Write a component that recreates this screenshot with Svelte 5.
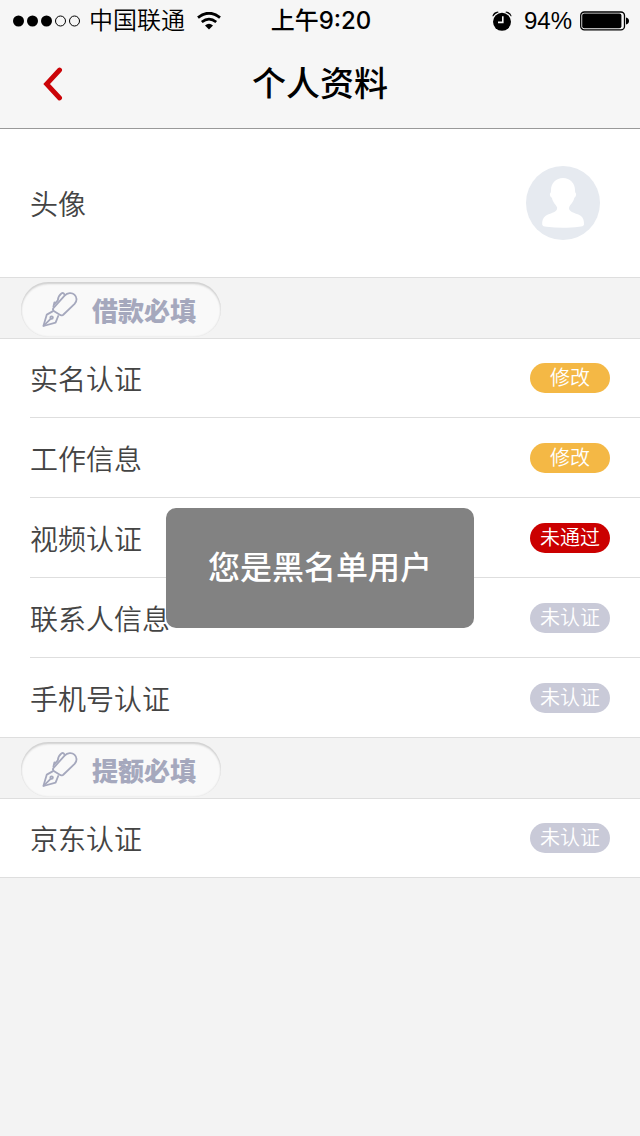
<script>
  const sections = [
    {
      title: "借款必填",
      items: [
        { name: "实名认证", status: "edit" },
        { name: "工作信息", status: "edit" },
        { name: "视频认证", status: "failed" },
        { name: "联系人信息", status: "none" },
        { name: "手机号认证", status: "none" },
      ],
    },
    {
      title: "提额必填",
      items: [{ name: "京东认证", status: "none" }],
    },
  ];

  const statusText = {
    edit: "修改",
    failed: "未通过",
    none: "未认证",
  };

  let toast = $state("您是黑名单用户");

  function goBack() {
    history.back();
  }
</script>

<div class="page">
  <div class="statusbar">
    <div class="carrier">
      <svg class="signal" width="68" height="12" viewBox="0 0 68 12">
        <circle cx="5.5" cy="6" r="5.5" />
        <circle cx="19.5" cy="6" r="5.5" />
        <circle cx="33.5" cy="6" r="5.5" />
        <circle class="empty" cx="47.5" cy="6" r="5" />
        <circle class="empty" cx="61.5" cy="6" r="5" />
      </svg>
      <span class="name">中国联通</span>
      <svg width="24" height="18" viewBox="0 0 24 18">
        <path d="M1 5.6 Q12 -3.2 23 5.6" fill="none" stroke="#000" stroke-width="2.8" />
        <path d="M4.8 10 Q12 4.2 19.2 10" fill="none" stroke="#000" stroke-width="2.7" />
        <path d="M8 13.4 Q12 10.2 16 13.4 L12 17.6 Z" />
      </svg>
    </div>
    <time>上午9:20</time>
    <div class="power">
      <svg width="20" height="20" viewBox="0 0 20 20">
        <circle cx="10" cy="10.8" r="9" />
        <path d="M0.4 5 Q1.4 1 6 0.6 L6.6 1.2 Q3 2.4 1 5.4 Z M19.6 5 Q18.6 1 14 0.6 L13.4 1.2 Q17 2.4 19 5.4 Z" />
        <path d="M10.8 5.2 V11.4 H6" fill="none" stroke="#f6f6f6" stroke-width="1.6" />
      </svg>
      <span class="percent">94%</span>
      <svg width="49" height="20" viewBox="0 0 49 20">
        <rect x="0.7" y="1" width="43.8" height="17.8" rx="3.6" fill="none" stroke="#000" stroke-width="1.3" />
        <rect x="2.2" y="2.5" width="39.2" height="14.8" rx="2" />
        <path d="M46 6.6 Q49 7.4 49 10 Q49 12.6 46 13.4 Z" />
      </svg>
    </div>
  </div>

  <header>
    <button class="back" aria-label="返回" onclick={goBack}>
      <svg width="20" height="34" viewBox="0 0 20 34">
        <path d="M16.6 3 L3.6 17 L16.6 31" fill="none" stroke="#cb0408" stroke-width="4.8" stroke-linecap="round" stroke-linejoin="miter" />
      </svg>
    </button>
    <h1>个人资料</h1>
  </header>

  <main>
    <a class="avatar-row" href="#avatar">
      <span>头像</span>
      <svg width="74" height="74" viewBox="0 0 74 74">
        <circle cx="37" cy="37" r="37" fill="#e6eaf0" />
        <path
          d="M37 12 C44 12 49 17 49 24 C49 26 49.4 26.6 50 27.6 C50.4 29.4 49.6 31 48.4 31.8 C47.6 35.2 46 37.4 44 39.4 C42.6 41.4 42.8 43 44 44.6 C46.6 47.4 52 47.8 55 50 C57.6 52 58 55 58 58.4 C57.6 60 56 60.4 53 60.8 C43 62.2 31 62.2 20.6 60.8 C18 60.4 16.6 60 16.2 58.4 C16 55 16.8 52 19.4 50 C22.4 47.8 27.6 47.4 30.2 44.6 C31.4 43 31.6 41.4 30 39.4 C28 37.4 26.6 35.2 25.8 31.8 C24.4 31 23.6 29.4 24 27.6 C24.8 26.6 25 26 25 24 C25 17 30 12 37 12 Z"
          fill="#fff"
        />
      </svg>
    </a>

    {#each sections as section}
      <section>
        <div class="section-head">
          <h2>
            <svg width="36" height="36" viewBox="0 0 36 36" fill="none" stroke="#a5a8bd" stroke-width="1.8" stroke-linejoin="round" stroke-linecap="round">
              <path d="M11.8 19 C10.8 18 10.8 16.6 11.8 15.6 L22.6 3.6 C25.4 0.6 29.8 0.2 32.4 2.6 C35.2 5.2 35.2 9 32.6 11.8 L21 23 C19.8 23.6 18.8 23.6 17.8 22.8 Z" />
              <path d="M11.4 14.6 L12.4 10.4 M12 12.6 L15.8 8.4 C16 5.4 17.2 3 19.4 1.4 C20.6 0.6 22 1 22.4 2.6" />
              <path d="M10.6 19.4 L4.8 22.6 L1.4 34 L13.6 30.6 L16.2 24" />
              <path d="M1.8 33.6 L8.6 26.8" />
              <circle cx="9.6" cy="25.6" r="1.3" />
            </svg>
            {section.title}
          </h2>
        </div>
        <ul>
          {#each section.items as item}
            <li>
              <a href="#{item.status}">
                <span>{item.name}</span>
                <span class="badge {item.status}">{statusText[item.status]}</span>
              </a>
            </li>
          {/each}
        </ul>
      </section>
    {/each}
  </main>

  {#if toast}
    <div class="toast" role="alert">{toast}</div>
  {/if}
</div>

<style>
  :global(body) {
    background: #f3f3f3;
  }

  * {
    box-sizing: border-box;
  }

  .page {
    min-height: 100vh;
    font-family: Inter, "Noto Sans CJK SC", sans-serif;
    color: #444;
    background: #f3f3f3;
  }

  svg {
    display: block;
    flex: none;
  }

  .statusbar {
    display: grid;
    grid-template-columns: 1fr auto 1fr;
    align-items: center;
    height: 40px;
    padding: 0 11px 0 13px;
    font-size: 24px;
    line-height: 42px;
    color: #000;
    background: #f6f6f6;
  }

  .carrier,
  .power {
    display: flex;
    align-items: center;
    gap: 8px;
    font-weight: 350;
  }

  .power {
    justify-content: flex-end;
  }

  .name {
    padding-right: 4px;
  }

  .percent {
    padding-left: 4px;
    font-family: "Liberation Sans", sans-serif;
  }

  .signal .empty {
    fill: none;
    stroke: #000;
  }

  time {
    font-weight: 500;
  }

  header {
    display: grid;
    grid-template-columns: 80px 1fr 80px;
    align-items: center;
    height: 89px;
    color: #000;
    background: #f6f6f6;
    border-bottom: 1px solid #999;
  }

  .back {
    display: flex;
    align-items: center;
    height: 88px;
    padding: 0 0 0 43px;
    border: 0;
    background: none;
    cursor: pointer;
  }

  h1 {
    margin: 0;
    font-size: 34px;
    line-height: 88px;
    font-weight: 500;
    text-align: center;
  }

  a {
    color: inherit;
    text-decoration: none;
  }

  .avatar-row {
    display: flex;
    align-items: center;
    justify-content: space-between;
    height: 149px;
    padding: 0 40px 0 30px;
    font-size: 28px;
    font-weight: 350;
    background: #fff;
    border-bottom: 1px solid #dedede;
  }

  .section-head {
    padding: 4px 21px 0;
    height: 61px;
    border-bottom: 1px solid #dedede;
  }

  h2 {
    display: flex;
    align-items: center;
    gap: 14px;
    width: 200px;
    height: 55px;
    margin: 0;
    padding-left: 21px;
    border-radius: 28px;
    background: #f9f9f9;
    box-shadow: inset 0 2px 2px #d0d0d0, inset 0 0 2px #d8d8d8;
    font-size: 26px;
    font-weight: 900;
    color: #a5a8bd;
  }

  ul {
    margin: 0;
    padding: 0;
    list-style: none;
    background: #fff;
    border-bottom: 1px solid #dedede;
  }

  li {
    padding-left: 30px;
  }

  li a {
    display: flex;
    align-items: center;
    justify-content: space-between;
    height: 78px;
    padding-right: 30px;
    font-size: 28px;
    font-weight: 350;
  }

  li + li a {
    height: 80px;
    border-top: 1px solid #dedede;
  }

  .badge {
    width: 80px;
    height: 30px;
    border-radius: 15px;
    font-size: 20px;
    line-height: 30px;
    text-align: center;
    color: #fff;
  }

  .edit {
    background: #f4b845;
  }

  .failed {
    background: #cb0000;
  }

  .none {
    background: #c9cad8;
  }

  .toast {
    position: fixed;
    top: 50%;
    left: 50%;
    transform: translate(-50%, -50%);
    padding: 36px 42px;
    border-radius: 10px;
    font-size: 32px;
    line-height: 48px;
    font-weight: 500;
    white-space: nowrap;
    color: #fff;
    background: #828282;
  }
</style>
